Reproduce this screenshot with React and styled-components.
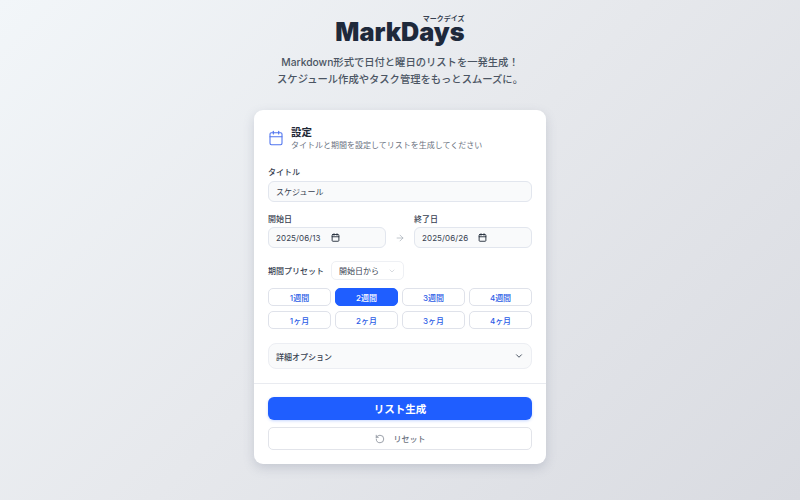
import { Calendar, ChevronDown, RotateCw, ArrowRight } from "lucide-react";
import styled, { createGlobalStyle } from "styled-components";

const weeks = ["1週間", "2週間", "3週間", "4週間"];
const months = ["1ヶ月", "2ヶ月", "3ヶ月", "4ヶ月"];

const GlobalStyle = createGlobalStyle`
  html, body {
    margin: 0;
    height: 100%;
  }
  body {
    font-family: Inter, "Noto Sans CJK JP", sans-serif;
    color: #1f2937;
  }
  * {
    box-sizing: border-box;
  }
`;

const Page = styled.div`
  width: 800px;
  height: 500px;
  overflow: hidden;
  display: flex;
  flex-direction: column;
  align-items: center;
  padding-top: 14px;
  background: linear-gradient(135deg, #f2f6f9 0%, #e6e8ec 50%, #d9dbe1 100%);
`;

const Logo = styled.div`
  position: relative;
  font-size: 25.2px;
  line-height: 36px;
  font-weight: 900;
  letter-spacing: 0;
  color: #1e293b;
`;

const LogoKana = styled.span`
  position: absolute;
  top: 0;
  right: 0;
  font-size: 7px;
  line-height: 10px;
  font-weight: 600;
  letter-spacing: 0;
  color: #374151;
`;

const Lead = styled.p`
  margin: 4px 0 22px;
  text-align: center;
  font-size: 10.3px;
  line-height: 17px;
  font-weight: 500;
  color: #4b5563;
`;

const Card = styled.main`
  width: 292px;
  height: 354px;
  background: #fff;
  border-radius: 9px;
  box-shadow: 0 4px 11px rgba(100, 110, 135, 0.24);
`;

const Form = styled.div`
  padding: 15px 14px 14px;
  border-bottom: 1px solid #e9ebf0;
  display: flex;
  flex-direction: column;
`;

const CardHead = styled.header`
  display: flex;
  align-items: center;
  gap: 7px;
  height: 26px;
  margin-bottom: 15px;
  color: #4f74ee;
`;

const CardTitle = styled.h2`
  margin: 0;
  font-size: 10.5px;
  line-height: 13px;
  font-weight: 700;
  color: #1f2937;
`;

const CardNote = styled.p`
  margin: 0;
  font-size: 8px;
  line-height: 12px;
  color: #6b7280;
`;

const Label = styled.label`
  display: block;
  font-size: 8px;
  line-height: 12px;
  font-weight: 500;
  color: #374151;
  margin-bottom: ${(p) => (p.$tight ? "2px" : "3px")};
`;

const Field = styled.div`
  height: 21px;
  padding: 0 7px;
  display: flex;
  align-items: center;
  font-size: 8px;
  border: 1px solid #e2e6ee;
  border-radius: 6px;
  background: #f9fafb;
  color: #374151;
`;

const DateRow = styled.div`
  display: grid;
  grid-template-columns: 1fr 28px 1fr;
  align-items: end;
  margin: 11px 0 13px;
`;

const DateField = styled(Field)`
  gap: 10px;
  letter-spacing: 0.1px;
`;

const RangeArrow = styled.div`
  height: 21px;
  display: flex;
  align-items: center;
  justify-content: center;
  color: #9ca3af;
`;

const PresetRow = styled.div`
  display: flex;
  align-items: center;
  gap: 7px;
  margin-bottom: 8px;
`;

const PresetLabel = styled.span`
  font-size: 8px;
  font-weight: 500;
  color: #374151;
`;

const PresetSelect = styled.div`
  width: 73px;
  height: 19px;
  padding: 0 7px;
  display: flex;
  align-items: center;
  justify-content: space-between;
  font-size: 8px;
  border: 1px solid #eef0f4;
  border-radius: 5px;
  color: #374151;
`;

const PresetGrid = styled.div`
  display: grid;
  grid-template-columns: repeat(4, 63px);
  grid-auto-rows: 18px;
  justify-content: space-between;
  row-gap: 5px;
`;

const PresetButton = styled.button`
  padding: 0;
  font: inherit;
  font-size: 8px;
  font-weight: 500;
  border-radius: 5px;
  border: 1px solid ${(p) => (p.$active ? "#1f5eff" : "#dfe2ea")};
  background: ${(p) => (p.$active ? "#1f5eff" : "#fff")};
  color: ${(p) => (p.$active ? "#fff" : "#2b5ce6")};
`;

const Details = styled.div`
  height: 26px;
  margin-top: 14px;
  padding: 0 7px;
  display: flex;
  align-items: center;
  justify-content: space-between;
  font-size: 8px;
  font-weight: 500;
  border: 1px solid #eceef3;
  border-radius: 8px;
  background: #f9fafb;
  color: #374151;
`;

const Actions = styled.div`
  padding: 13px 14px;
  display: flex;
  flex-direction: column;
  gap: 7px;
`;

const GenerateButton = styled.button`
  height: 23px;
  padding: 0;
  border: none;
  border-radius: 6px;
  font: inherit;
  font-size: 10.5px;
  font-weight: 700;
  color: #fff;
  background: #1f5eff;
  box-shadow: 0 1px 3px rgba(31, 94, 255, 0.25);
`;

const ResetButton = styled.button`
  height: 23px;
  padding: 0;
  display: flex;
  align-items: center;
  justify-content: center;
  gap: 9px;
  font: inherit;
  font-size: 8px;
  font-weight: 500;
  color: #6b7280;
  border: 1px solid #e2e4ea;
  border-radius: 5px;
  background: #fff;
`;

const App = () => (
  <>
    <GlobalStyle />
    <Page>
      <Logo>
        MarkDays
        <LogoKana>マークデイズ</LogoKana>
      </Logo>
      <Lead>
        Markdown形式で日付と曜日のリストを一発生成！
        <br />
        スケジュール作成やタスク管理をもっとスムーズに。
      </Lead>
      <Card>
        <Form>
          <CardHead>
            <Calendar size={16} strokeWidth={1.6} />
            <div>
              <CardTitle>設定</CardTitle>
              <CardNote>タイトルと期間を設定してリストを生成してください</CardNote>
            </div>
          </CardHead>
          <Label>タイトル</Label>
          <Field>スケジュール</Field>
          <DateRow>
            <div>
              <Label $tight>開始日</Label>
              <DateField>
                2025/06/13
                <Calendar size={9} strokeWidth={2.4} color="#1f2937" />
              </DateField>
            </div>
            <RangeArrow>
              <ArrowRight size={10} strokeWidth={1.5} />
            </RangeArrow>
            <div>
              <Label $tight>終了日</Label>
              <DateField>
                2025/06/26
                <Calendar size={9} strokeWidth={2.4} color="#1f2937" />
              </DateField>
            </div>
          </DateRow>
          <PresetRow>
            <PresetLabel>期間プリセット</PresetLabel>
            <PresetSelect>
              開始日から
              <ChevronDown size={8} color="#c4c8d0" />
            </PresetSelect>
          </PresetRow>
          <PresetGrid>
            {[...weeks, ...months].map((label) => (
              <PresetButton key={label} $active={label === "2週間"}>
                {label}
              </PresetButton>
            ))}
          </PresetGrid>
          <Details>
            詳細オプション
            <ChevronDown size={10} strokeWidth={2.4} color="#4b5563" />
          </Details>
        </Form>
        <Actions>
          <GenerateButton>リスト生成</GenerateButton>
          <ResetButton>
            <RotateCw size={10} strokeWidth={1.6} style={{ transform: "scaleX(-1)" }} />
            リセット
          </ResetButton>
        </Actions>
      </Card>
    </Page>
  </>
);

export default App;
